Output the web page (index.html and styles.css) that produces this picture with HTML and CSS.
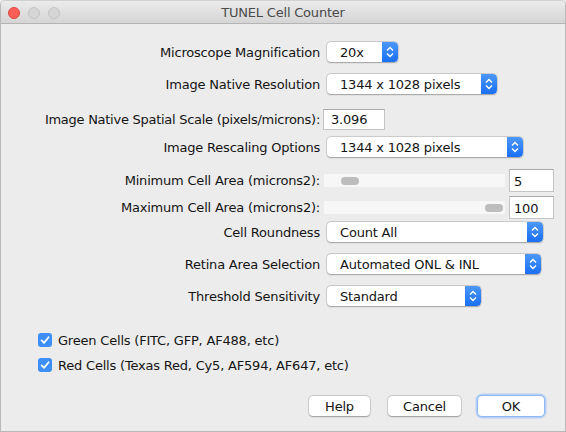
FILE: index.html
```html
<!DOCTYPE html>
<html>
<head>
<meta charset="utf-8">
<link rel="stylesheet" href="styles.css">
</head>
<body>
<div class="window">
  <div class="titlebar">
    <div class="lights">
      <span class="light red"></span>
      <span class="light gray"></span>
      <span class="light gray"></span>
    </div>
    <div class="title">TUNEL Cell Counter</div>
  </div>
  <div class="content">
    <div class="row r1">
      <div class="label">Microscope Magnification</div>
      <div class="ctrl">
        <div class="popup w71"><span class="val">20x</span><span class="arrows"><svg width="16" height="20" viewBox="0 0 16 20"><path d="M5 8.5 L8 5.5 L11 8.5 M5 11.5 L8 14.5 L11 11.5" fill="none" stroke="#fff" stroke-width="1.4"/></svg></span></div>
      </div>
    </div>
    <div class="row r2">
      <div class="label">Image Native Resolution</div>
      <div class="ctrl">
        <div class="popup w170"><span class="val">1344 x 1028 pixels</span><span class="arrows"><svg width="16" height="20" viewBox="0 0 16 20"><path d="M5 8.5 L8 5.5 L11 8.5 M5 11.5 L8 14.5 L11 11.5" fill="none" stroke="#fff" stroke-width="1.4"/></svg></span></div>
      </div>
    </div>
    <div class="row r3">
      <div class="label tight">Image Native Spatial Scale (pixels/microns):</div>
      <div class="ctrl">
        <div class="field f62">3.096</div>
      </div>
    </div>
    <div class="row r4">
      <div class="label">Image Rescaling Options</div>
      <div class="ctrl">
        <div class="popup w196"><span class="val">1344 x 1028 pixels</span><span class="arrows"><svg width="16" height="20" viewBox="0 0 16 20"><path d="M5 8.5 L8 5.5 L11 8.5 M5 11.5 L8 14.5 L11 11.5" fill="none" stroke="#fff" stroke-width="1.4"/></svg></span></div>
      </div>
    </div>
    <div class="row r5">
      <div class="label">Minimum Cell Area (microns2):</div>
      <div class="ctrl slidectrl">
        <div class="slider"><span class="knob kmin"></span></div>
        <div class="field f44 tall">5</div>
      </div>
    </div>
    <div class="row r6">
      <div class="label">Maximum Cell Area (microns2):</div>
      <div class="ctrl slidectrl">
        <div class="slider"><span class="knob kmax"></span></div>
        <div class="field f44 tall">100</div>
      </div>
    </div>
    <div class="row r7">
      <div class="label">Cell Roundness</div>
      <div class="ctrl">
        <div class="popup w216"><span class="val">Count All</span><span class="arrows"><svg width="16" height="20" viewBox="0 0 16 20"><path d="M5 8.5 L8 5.5 L11 8.5 M5 11.5 L8 14.5 L11 11.5" fill="none" stroke="#fff" stroke-width="1.4"/></svg></span></div>
      </div>
    </div>
    <div class="row r8">
      <div class="label">Retina Area Selection</div>
      <div class="ctrl">
        <div class="popup w214"><span class="val">Automated ONL &amp; INL</span><span class="arrows"><svg width="16" height="20" viewBox="0 0 16 20"><path d="M5 8.5 L8 5.5 L11 8.5 M5 11.5 L8 14.5 L11 11.5" fill="none" stroke="#fff" stroke-width="1.4"/></svg></span></div>
      </div>
    </div>
    <div class="row r9">
      <div class="label">Threshold Sensitivity</div>
      <div class="ctrl">
        <div class="popup w154"><span class="val">Standard</span><span class="arrows"><svg width="16" height="20" viewBox="0 0 16 20"><path d="M5 8.5 L8 5.5 L11 8.5 M5 11.5 L8 14.5 L11 11.5" fill="none" stroke="#fff" stroke-width="1.4"/></svg></span></div>
      </div>
    </div>

    <div class="check c1">
      <svg class="box" width="14" height="14" viewBox="0 0 14 14"><rect x="0" y="0" width="14" height="14" rx="3" fill="#3d8ef6"/><path d="M3.6 7.4 L6 9.9 L10.6 4.2" fill="none" stroke="#fff" stroke-width="1.7" stroke-linecap="round" stroke-linejoin="round"/></svg>
      <span>Green Cells (FITC, GFP, AF488, etc)</span>
    </div>
    <div class="check c2">
      <svg class="box" width="14" height="14" viewBox="0 0 14 14"><rect x="0" y="0" width="14" height="14" rx="3" fill="#3d8ef6"/><path d="M3.6 7.4 L6 9.9 L10.6 4.2" fill="none" stroke="#fff" stroke-width="1.7" stroke-linecap="round" stroke-linejoin="round"/></svg>
      <span>Red Cells (Texas Red, Cy5, AF594, AF647, etc)</span>
    </div>

    <div class="buttons">
      <div class="btn bhelp">Help</div>
      <div class="btn bcancel">Cancel</div>
      <div class="btn bok">OK</div>
    </div>
  </div>
</div>
</body>
</html>
```

FILE: styles.css
```css
* { box-sizing: border-box; }
html, body { margin: 0; padding: 0; }
body {
  font-family: "DejaVu Sans", sans-serif;
  font-size: 13px;
  letter-spacing: -0.2px;
  color: #141414;
  background: #ececec;
}
.window {
  width: 566px;
  height: 432px;
  background: #ececec;
  border: 1px solid #b9b9b9;
  border-top-color: #d0d0d0;
  border-radius: 5px 5px 0 0;
  overflow: hidden;
}
.titlebar {
  height: 23px;
  background: linear-gradient(#ebebeb, #d5d5d5);
  border-bottom: 1px solid #b4b4b4;
  display: flex;
  align-items: center;
  position: relative;
}
.lights {
  display: flex;
  gap: 8px;
  padding-left: 7px;
  padding-top: 1px;
}
.light {
  width: 12px;
  height: 12px;
  border-radius: 50%;
  display: block;
}
.light.red { background: #fc5f57; border: 1px solid #e2463f; }
.light.gray { background: #d6d6d6; border: 1px solid #c4c4c4; }
.title {
  position: absolute;
  left: 0;
  right: 0;
  top: 0;
  bottom: 0;
  display: flex;
  align-items: center;
  justify-content: center;
  color: #4a4a4a;
  font-size: 13px;
  padding-top: 1px;
}
.content {
  padding-top: 17px;
  display: flex;
  flex-direction: column;
}
.row {
  display: grid;
  grid-template-columns: 319px 1fr;
  height: 22px;
  align-items: center;
}
.label {
  text-align: right;
  white-space: nowrap;
}
.label.tight { letter-spacing: -0.27px; }
.ctrl {
  display: flex;
  align-items: center;
  padding-left: 7px;
}
.r2, .r8, .r9 { margin-top: 10px; }
.r3 { margin-top: 13px; }
.r4 { margin-top: 6px; }
.r5 { margin-top: 11px; }
.r6 { margin-top: 5px; }
.r7 { margin-top: 3px; }

.popup {
  height: 20px;
  background: #fff;
  border-radius: 4px;
  box-shadow: 0 0 0 0.5px rgba(0,0,0,0.18), 0 0.5px 1.5px rgba(0,0,0,0.25);
  display: flex;
  align-items: center;
  justify-content: space-between;
  overflow: hidden;
}
.popup .val {
  padding-left: 13px;
  white-space: nowrap;
}
.popup .arrows {
  width: 16px;
  height: 20px;
  background: linear-gradient(#4c98f7, #1a6ff4);
  display: block;
  border-radius: 0 4px 4px 0;
}
.popup .arrows svg { display: block; }
.w71 { width: 71px; }
.w170 { width: 170px; }
.w196 { width: 196px; }
.w216 { width: 216px; }
.w214 { width: 214px; }
.w154 { width: 154px; }

.field {
  height: 21px;
  background: #fff;
  border: 1px solid #c4c4c4;
  border-top-color: #a9a9a9;
  padding-left: 7px;
  display: flex;
  align-items: center;
  margin-left: -4px;
}
.f62 { width: 62px; }
.f44 { width: 45px; margin-left: 4px; }
.field.tall { height: 23px; padding-top: 2px; padding-left: 4px; }

.slidectrl { padding-left: 4px; }
.slider {
  width: 181px;
  height: 13px;
  background: #f7f7f7;
  position: relative;
}
.knob {
  position: absolute;
  top: 3px;
  width: 18px;
  height: 8px;
  border-radius: 4px;
  background: #bdbdbd;
}
.kmin { left: 17px; }
.kmax { left: 161px; }

.check {
  display: flex;
  align-items: center;
  height: 20px;
  padding-left: 37px;
}
.check .box { margin-right: 6px; flex: none; }
.c1 { margin-top: 23px; }
.c2 { margin-top: 5px; }

.buttons {
  display: flex;
  justify-content: flex-end;
  margin-top: 21px;
  padding-right: 21px;
}
.btn {
  height: 20px;
  background: #fff;
  border-radius: 4px;
  box-shadow: 0 0 0 0.5px rgba(0,0,0,0.2), 0 0.5px 1.5px rgba(0,0,0,0.28);
  display: flex;
  align-items: center;
  justify-content: center;
}
.bhelp { width: 61px; }
.bcancel { width: 73px; margin-left: 18px; }
.bok {
  width: 66px;
  margin-left: 17px;
  box-shadow: 0 0 0 1px #8fb8f2, 0 0 0 2.5px #b6d0f5;
}
```
